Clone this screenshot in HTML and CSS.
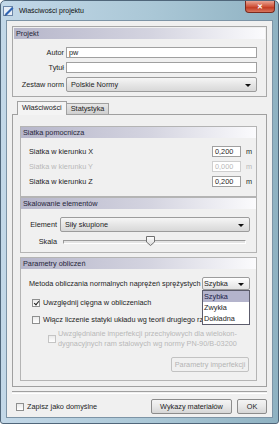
FILE: index.html
```html
<!DOCTYPE html>
<html lang="pl">

<head>
  <title>Właściwości projektu</title>
  <meta charset="UTF-8" />
  <link rel="stylesheet" href="styles.css">
</head>

<body>
  <div class="window">
    <div class="titlebar">
      <svg class="app-icon" width="11" height="11" viewBox="0 0 11 11">
        <rect x="0.5" y="1.5" width="9" height="9" fill="#e8eef6" stroke="#6c86a8" />
        <path d="M2 9 L9 2 L10.5 3.5 L3.5 10.5 Z" fill="#2f64b4" />
        <path d="M2 9 L3.5 10.5 L1.5 10.5 Z" fill="#1c3c70" />
      </svg>
      <span class="title">Właściwości projektu</span>
      <div class="close">&#x2715;</div>
    </div>

    <div class="client">
      <div class="group project">
        <div class="group-head">Projekt</div>
        <div class="form">
          <span class="label">Autor</span>
          <div class="input">pw</div>
          <span class="label">Tytuł</span>
          <div class="input"></div>
          <span class="label">Zestaw norm</span>
          <div class="select tall">Polskie Normy<i class="arrow"></i></div>
        </div>
      </div>

      <div class="tabs">
        <div class="tab active">Właściwości</div>
        <div class="tab">Statystyka</div>
      </div>

      <div class="tab-panel">
        <div class="section grid-section">
          <div class="group-head">Siatka pomocnicza</div>
          <div class="grid-rows">
            <span>Siatka w kierunku X</span>
            <div class="input small">0,200</div>
            <span class="unit">m</span>
            <span class="disabled">Siatka w kierunku Y</span>
            <div class="input small disabled">0,000</div>
            <span class="unit disabled">m</span>
            <span>Siatka w kierunku Z</span>
            <div class="input small">0,200</div>
            <span class="unit">m</span>
          </div>
        </div>

        <div class="section scale-section">
          <div class="group-head">Skalowanie elementów</div>
          <div class="scale-rows">
            <span class="label">Element</span>
            <div class="select tall">Siły skupione<i class="arrow"></i></div>
            <span class="label">Skala</span>
            <div class="slider">
              <div class="track"></div>
              <svg class="thumb" width="9" height="10" viewBox="0 0 9 10">
                <defs>
                  <linearGradient id="thumbFill" x1="0" y1="0" x2="0" y2="1">
                    <stop offset="0" stop-color="#ffffff" />
                    <stop offset="1" stop-color="#d8d8d8" />
                  </linearGradient>
                </defs>
                <path d="M0.5 0.5 H8.5 V6 L4.5 9.5 L0.5 6 Z" fill="url(#thumbFill)" stroke="#707070" />
              </svg>
            </div>
          </div>
        </div>

        <div class="section calc-section">
          <div class="group-head">Parametry obliczeń</div>
          <div class="method-row">
            <span>Metoda obliczania normalnych naprężeń sprężystych</span>
            <div class="select method">Szybka<i class="arrow"></i>
              <ul class="dropdown">
                <li class="selected">Szybka</li>
                <li>Zwykła</li>
                <li>Dokładna</li>
              </ul>
            </div>
          </div>
          <div class="check-row first">
            <span class="checkbox checked"></span>
            <span>Uwzględnij cięgna w obliczeniach</span>
          </div>
          <div class="check-row">
            <span class="checkbox"></span>
            <span>Włącz liczenie statyki układu wg teorii drugiego rzędu</span>
          </div>
          <div class="check-row sub disabled">
            <span class="checkbox"></span>
            <span>Uwzględnianie imperfekcji przechyłowych dla wielokon-<br>dygnacyjnych ram stalowych wg normy PN-90/B-03200</span>
          </div>
          <div class="button-row">
            <div class="button disabled">Parametry imperfekcji</div>
          </div>
        </div>
      </div>

      <div class="separator"></div>

      <div class="footer">
        <div class="check-row">
          <span class="checkbox"></span>
          <span>Zapisz jako domyślne</span>
        </div>
        <div class="buttons">
          <div class="button wide">Wykazy materiałów</div>
          <div class="button ok">OK</div>
        </div>
      </div>
    </div>
  </div>
</body>

</html>
```

FILE: styles.css
```css
body {
  margin: 0;
  background-color: #ffffff;
  color: #1e1e1e;
  font-family: 'Liberation Sans', Arial, sans-serif;
  font-size: 7.3px;
}

.window {
  width: 279px;
  height: 424px;
  box-sizing: border-box;
  display: flex;
  flex-direction: column;
  border: 1px solid #50667a;
  border-radius: 5px 5px 3px 3px;
  background: linear-gradient(to right, #c3d8e8, #aac7d6 55%, #8fb2c2);
}

.titlebar {
  height: 19px;
  display: flex;
  align-items: center;
  flex-shrink: 0;
}

.app-icon {
  margin-left: 2px;
}

.title {
  margin-left: 5px;
  font-size: 7px;
  color: #101010;
}

.close {
  align-self: flex-start;
  margin-left: auto;
  margin-right: 3px;
  width: 30px;
  height: 12px;
  box-sizing: border-box;
  border: 1px solid #7a2a1e;
  border-top: none;
  border-radius: 0 0 4px 4px;
  background: linear-gradient(#e9a595, #cf5339 50%, #c23d24 60%, #d8765e);
  color: #ffffff;
  font-size: 7px;
  font-weight: bold;
  line-height: 11px;
  text-align: center;
}

.client {
  flex: 1;
  margin: 0 5px 5px 5px;
  border: 1px solid #7d94a6;
  background-color: #f0f0f0;
}

.group {
  margin: 5px 0 0 5px;
  width: 255px;
  height: 71px;
  box-sizing: border-box;
  border: 1px solid #a8a8a8;
  padding: 1px;
}

.group-head {
  height: 11px;
  line-height: 11px;
  padding-left: 2px;
  background: linear-gradient(to right, #b6b6ca, #d4d4e0 55%, #fbfbfd);
  color: #26263a;
}

.form {
  display: grid;
  grid-template-columns: 50px 1fr;
  column-gap: 2px;
  row-gap: 4px;
  align-items: center;
  margin-top: 8px;
  padding-right: 8px;
}

.label {
  text-align: right;
}

.input {
  height: 11px;
  box-sizing: border-box;
  border: 1px solid #a0a0a0;
  background-color: #ffffff;
  line-height: 9px;
  padding-left: 2px;
}

.input.small {
  width: 29px;
}

.select {
  position: relative;
  height: 13px;
  box-sizing: border-box;
  border: 1px solid #9c9c9c;
  border-radius: 2px;
  background: linear-gradient(#f6f6f6, #e6e6e6 50%, #d8d8d8);
  line-height: 11px;
  padding-left: 4px;
}

.select.tall {
  height: 15px;
  line-height: 13px;
}

.arrow {
  position: absolute;
  right: 5px;
  top: 50%;
  margin-top: -1px;
  border-left: 3px solid transparent;
  border-right: 3px solid transparent;
  border-top: 3px solid #111111;
}

.tabs {
  display: flex;
  align-items: flex-end;
  height: 13px;
  margin: 4px 0 0 10px;
}

.tab {
  height: 11px;
  box-sizing: border-box;
  border: 1px solid #a0a0a0;
  border-bottom: none;
  border-left: none;
  padding: 0 4px;
  line-height: 10px;
  background: linear-gradient(#e6e6e6, #cfcfcf);
}

.tab.active {
  position: relative;
  height: 14px;
  margin-bottom: -1px;
  border-left: 1px solid #a0a0a0;
  background: #f4f4f4;
  line-height: 12px;
}

.tab-panel {
  margin-left: 5px;
  width: 255px;
  height: 273px;
  box-sizing: border-box;
  border: 1px solid #a0a0a0;
  padding: 11px 0 0 7px;
}

.section {
  width: 237px;
  box-sizing: border-box;
  border: 1px solid #b4b4b4;
}

.grid-section {
  height: 71px;
}

.grid-rows {
  display: grid;
  grid-template-columns: 1fr 29px 15px;
  row-gap: 4px;
  align-items: center;
  margin-top: 8px;
  padding-left: 8px;
}

.unit {
  padding-left: 5px;
}

.disabled {
  color: #b8b8b8;
}

.input.disabled {
  border-color: #cfcfcf;
}

.scale-section {
  height: 56px;
}

.scale-rows {
  display: grid;
  grid-template-columns: 36px 1fr;
  column-gap: 3px;
  row-gap: 4px;
  align-items: center;
  margin-top: 8px;
  padding-right: 6px;
}

.slider {
  position: relative;
  height: 11px;
  margin-left: 3px;
}

.track {
  position: absolute;
  left: 0;
  right: 4px;
  top: 4px;
  height: 2px;
  border-top: 1px solid #9a9a9a;
  border-left: 1px solid #9a9a9a;
  border-bottom: 1px solid #ffffff;
  border-right: 1px solid #ffffff;
  background-color: #e4e4e4;
}

.thumb {
  position: absolute;
  left: 83px;
  top: 0;
}

.calc-section {
  height: 124px;
  margin-top: 4px;
}

.method-row {
  display: flex;
  align-items: center;
  justify-content: space-between;
  margin-top: 8px;
  padding: 0 6px 0 8px;
}

.select.method {
  width: 48px;
  background: linear-gradient(#ffffff, #f0f0f0 50%, #e2e2e2);
  padding-left: 1px;
}

.dropdown {
  position: absolute;
  top: 12px;
  left: -1px;
  width: 46px;
  margin: 0;
  padding: 0;
  list-style: none;
  border: 1px solid #5c5c6c;
  background-color: #ffffff;
  z-index: 2;
}

.dropdown li {
  height: 11px;
  line-height: 11px;
  padding-left: 1px;
}

.dropdown .selected {
  background-color: #b4b4cc;
  color: #20204a;
}

.check-row {
  display: flex;
  align-items: center;
  gap: 3px;
  padding-left: 11px;
  height: 11px;
  margin-top: 6px;
}

.check-row.first {
  margin-top: 7px;
}

.check-row.sub {
  height: 20px;
  margin-top: 4px;
  padding-left: 27px;
  gap: 2px;
  line-height: 10px;
}

.checkbox {
  position: relative;
  width: 8px;
  height: 8px;
  flex-shrink: 0;
  box-sizing: border-box;
  border: 1px solid #8e8f8f;
  background: linear-gradient(#eaeaea, #ffffff);
}

.check-row.disabled .checkbox {
  border-color: #c4c4c4;
}

.checkbox.checked::after {
  content: "";
  position: absolute;
  left: 2px;
  top: 0;
  width: 2px;
  height: 4px;
  border-right: 1px solid #202020;
  border-bottom: 1px solid #202020;
  transform: rotate(40deg);
}

.button-row {
  display: flex;
  justify-content: flex-end;
  margin-top: 8px;
  padding-right: 7px;
}

.button {
  height: 15px;
  box-sizing: border-box;
  border: 1px solid #8c8c8c;
  border-radius: 2px;
  background: linear-gradient(#f4f4f4, #e8e8e8 50%, #d6d6d6);
  line-height: 13px;
  text-align: center;
}

.button-row .button {
  width: 78px;
}

.button.disabled {
  border-color: #c2c2c2;
  background: #f0f0f0;
  color: #b4b4b4;
}

.separator {
  margin: 4px 0 0 5px;
  width: 255px;
  height: 1px;
  border-top: 1px solid #a0a0a0;
  border-bottom: 1px solid #ffffff;
}

.footer {
  display: flex;
  align-items: center;
  justify-content: space-between;
  margin-top: 5px;
  padding: 0 5px 0 9px;
}

.footer .check-row {
  margin-top: 0;
  padding-left: 0;
  gap: 3px;
}

.buttons {
  display: flex;
  gap: 5px;
}

.button.wide {
  width: 81px;
}

.button.ok {
  width: 30px;
}
```
